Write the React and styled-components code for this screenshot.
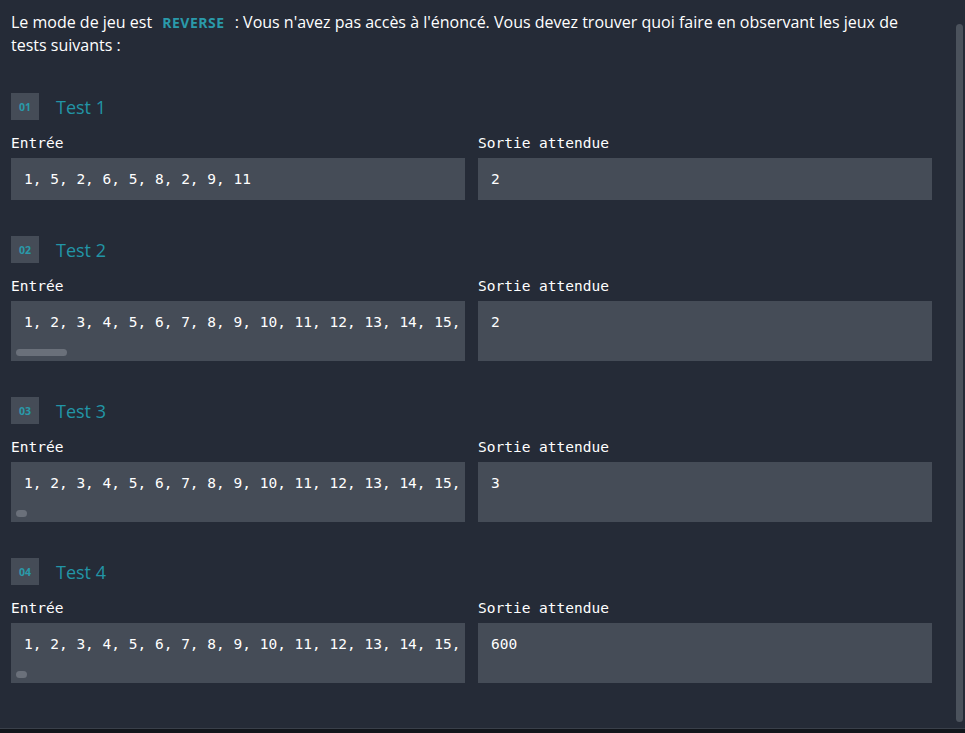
import React from "react";
import styled, { createGlobalStyle } from "styled-components";

const Global = createGlobalStyle`
  html, body { margin: 0; padding: 0; background: #11151b; }
  body { font-family: "Open Sans", "Liberation Sans", sans-serif; }
  * { box-sizing: border-box; }
`;

const Panel = styled.div`
  position: relative;
  height: 729px;
  border-bottom: 1px solid #3a404a;
  background: #252b37;
  overflow: hidden;
  padding: 11px 33px 0 11px;
  color: #ffffff;
`;

const PageThumb = styled.div`
  position: absolute;
  top: 24px;
  right: 2px;
  width: 7px;
  height: 698px;
  border-radius: 4px;
  background: #4b525c;
`;

const Intro = styled.p`
  margin: 0;
  font-size: 16px;
  line-height: 23px;
  color: #ffffff;
`;

const Mode = styled.span`
  display: inline-block;
  padding: 0 6px;
  font-weight: 700;
  font-size: 14px;
  letter-spacing: 0.5px;
  color: #2a9aaa;
`;

const Tests = styled.div`
  display: flex;
  flex-direction: column;
  gap: 36px;
  margin-top: 36px;
`;

const Section = styled.section`
  display: flex;
  flex-direction: column;
`;

const Header = styled.div`
  display: flex;
  align-items: center;
  gap: 17px;
  height: 27px;
`;

const Badge = styled.span`
  display: flex;
  align-items: center;
  justify-content: center;
  width: 28px;
  height: 27px;
  background: #454c57;
  color: #2a9aaa;
  font-size: 10.5px;
  font-weight: 700;
`;

const Title = styled.h3`
  margin: 0;
  font-size: 18px;
  font-weight: 400;
  color: #2295a6;
`;

const Columns = styled.div`
  display: grid;
  grid-template-columns: 1fr 1fr;
  column-gap: 13px;
  margin-top: 14px;
`;

const Field = styled.div`
  display: flex;
  flex-direction: column;
  min-width: 0;
`;

const Label = styled.div`
  font-family: "DejaVu Sans Mono", "Liberation Mono", monospace;
  font-size: 14.5px;
  line-height: 18px;
  color: #ffffff;
  margin-bottom: 6px;
`;

const Value = styled.pre`
  position: relative;
  flex: 1;
  margin: 0;
  padding: 11px 13px ${(p) => (p.$scroll ? "29px" : "11px")};
  background: #454c57;
  font-family: "DejaVu Sans Mono", "Liberation Mono", monospace;
  font-size: 14.5px;
  line-height: 20px;
  color: #ffffff;
  white-space: pre;
  overflow: hidden;
`;

const ScrollThumb = styled.span`
  position: absolute;
  left: 5px;
  bottom: 5px;
  height: 7px;
  border-radius: 4px;
  background: #6a707a;
`;

const range = (n) => Array.from({ length: n }, (_, i) => i + 1).join(", ");

const tests = [
  { id: "01", input: "1, 5, 2, 6, 5, 8, 2, 9, 11", output: "2", thumb: 0 },
  { id: "02", input: range(99), output: "2", thumb: 51 },
  { id: "03", input: range(246), output: "3", thumb: 11 },
  { id: "04", input: range(246), output: "600", thumb: 11 },
];

export default function App() {
  return (
    <>
      <Global />
      <Panel>
        <Intro>
          Le mode de jeu est <Mode>REVERSE</Mode> : Vous n'avez pas accès à l'énoncé. Vous devez trouver quoi faire en observant les jeux de tests suivants :
        </Intro>
        <Tests>
          {tests.map((t, i) => (
            <Section key={t.id}>
              <Header>
                <Badge>{t.id}</Badge>
                <Title>Test {i + 1}</Title>
              </Header>
              <Columns>
                <Field>
                  <Label>Entrée</Label>
                  <Value $scroll={t.thumb > 0}>
                    {t.input}
                    {t.thumb > 0 && <ScrollThumb style={{ width: t.thumb }} />}
                  </Value>
                </Field>
                <Field>
                  <Label>Sortie attendue</Label>
                  <Value>{t.output}</Value>
                </Field>
              </Columns>
            </Section>
          ))}
        </Tests>
        <PageThumb />
      </Panel>
    </>
  );
}
